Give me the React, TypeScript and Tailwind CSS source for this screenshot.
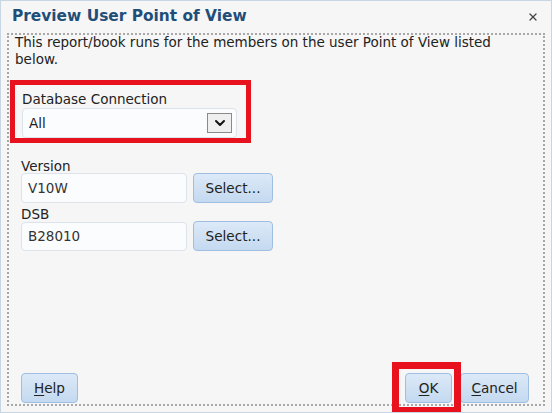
import { ChevronDown, X } from 'lucide-react';

const btn =
  'h-[30px] rounded-[4px] border border-[#9ebfe2] bg-gradient-to-b from-[#dce9f7] to-[#c4d9f0] text-[13.6px] text-[#222] flex items-center justify-center';

export default function App() {
  return (
    <div
      className="relative w-[552px] h-[413px] overflow-hidden bg-[#f6f6f6] border border-[#c8d5e3] flex flex-col"
      style={{ fontFamily: '"DejaVu Sans", Verdana, sans-serif' }}
    >
      {/* Title bar */}
      <div className="h-[32px] flex items-center justify-between pl-[11px] pr-[12px]">
        <span className="text-[15.4px] font-bold text-[#1f4e79]">Preview User Point of View</span>
        <X className="w-[12px] h-[12px] text-[#444]" strokeWidth={2.5} />
      </div>

      {/* Dotted content area */}
      <div className="flex-1 ml-[6px] mr-[6px] mb-[6px] border-2 border-dotted border-[#a8a8a8] flex flex-col pl-[12px] pr-[12px] pb-[1px] text-[13.5px] text-[#222]">
        <p className="leading-[17px] -ml-[6px] -mt-[1px]">
          This report/book runs for the members on the user Point of View listed
          <br />
          below.
        </p>

        {/* Database connection, highlighted */}
        <div className="mt-[12px] -ml-[11px] w-[241px] h-[63px] border-[5px] border-[#e8121f] pl-[7px] pt-[6px]">
          <div className="leading-[16px]">Database Connection</div>
          <div className="mt-[1px] w-[215px] h-[30px] rounded-[4px] border border-[#dde3ea] bg-[#fbfcfd] flex items-center justify-between pl-[6px] pr-[4px]">
            <span>All</span>
            <span className="w-[25px] h-[20px] border border-[#8a8a8a] bg-[#efefef] flex items-center justify-center">
              <ChevronDown className="w-[16px] h-[16px] text-[#111]" strokeWidth={3} />
            </span>
          </div>
        </div>

        {/* Version */}
        <div className="mt-[15px] leading-[16px]">Version</div>
        <div className="mt-[-1px] flex items-center gap-[6px]">
          <div className="w-[166px] h-[30px] rounded-[4px] border border-[#dde3ea] bg-[#fbfcfd] flex items-center pl-[6px] text-[#333]">
            V10W
          </div>
          <button className={`${btn} w-[80px]`}>Select...</button>
        </div>

        {/* DSB */}
        <div className="mt-[3px] leading-[16px]">DSB</div>
        <div className="mt-[-1px] flex items-center gap-[6px]">
          <div className="w-[166px] h-[29px] rounded-[4px] border border-[#dde3ea] bg-[#fbfcfd] flex items-center pl-[6px] text-[#333]">
            B28010
          </div>
          <button className={`${btn} w-[80px]`}>Select...</button>
        </div>

        {/* Footer buttons */}
        <div className="mt-auto mb-[0px] flex items-center">
          <button className={`${btn} w-[57px]`}>
            <span className="underline underline-offset-2">H</span>elp
          </button>
          <div className="ml-auto relative mr-[2px] flex items-center gap-[8px]">
            <button className={`${btn} w-[47px]`}>
              <span className="underline underline-offset-2">O</span>K
            </button>
            <button className={`${btn} w-[69px]`}>
              <span className="underline underline-offset-2">C</span>ancel
            </button>
            {/* red annotation around OK */}
            <div className="absolute left-[-13px] top-[-11px] w-[69px] h-[52px] border-[7px] border-[#e8121f]" />
          </div>
        </div>
      </div>
    </div>
  );
}
